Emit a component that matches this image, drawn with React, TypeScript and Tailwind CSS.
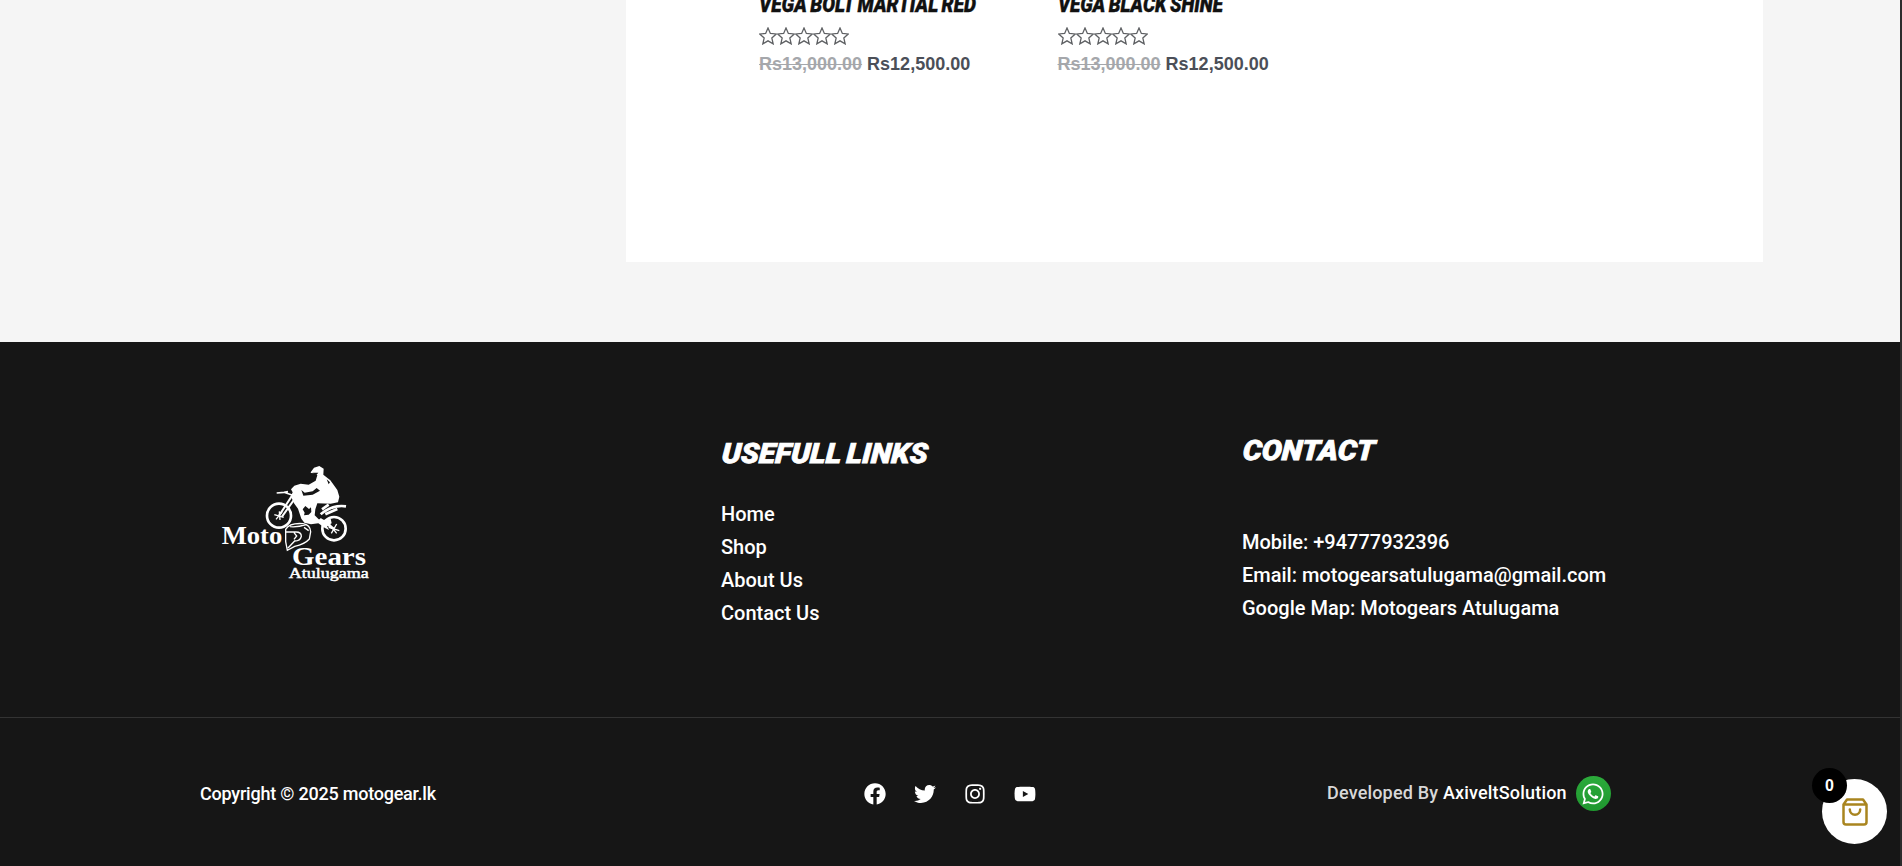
import { FaFacebook, FaTwitter, FaInstagram, FaYoutube, FaWhatsapp } from "react-icons/fa";

const starPath = "M8 .9l2.100 4.800 5.200.5-3.900 3.500 1.200 5.300L8 12.300 3.400 15l1.200-5.300L.7 6.200l5.200-.5z";

function Product({ name, width }: { name: string; width: number }) {
  return (
    <div className="flex w-[298.5px] flex-col items-start">
      <svg width={width + 8} height="24" className="block overflow-visible">
        <text x="0" y="20.5" textLength={width} lengthAdjust="spacingAndGlyphs" wordSpacing="-1.5" fontFamily="Roboto, sans-serif" fontWeight="900" fontStyle="italic" fontSize="21.5" fill="#111" stroke="#111" strokeWidth="0.4">
          {name}
        </text>
      </svg>
      <div className="mt-[12px] flex h-[18px]">
        {[0, 1, 2, 3, 4].map((i) => (
          <svg key={i} width="18" height="18" viewBox="0 0 16 16" fill="none" stroke="#5f6164" strokeWidth="1.15">
            <path d={starPath} />
          </svg>
        ))}
      </div>
      <div className="mt-[6px] flex gap-[5px] text-[18px] font-bold leading-[27px] text-[#4b4f58]">
        <del className="text-[#a5a7ab]">Rs13,000.00</del>
        <span>Rs12,500.00</span>
      </div>
    </div>
  );
}

function Heading({ text, width }: { text: string; width: number }) {
  return (
    <h2>
      <svg width={width + 8} height="30" className="block overflow-visible">
        <text x="0" y="25" transform="translate(2 0) skewX(-4)" textLength={width} lengthAdjust="spacingAndGlyphs" wordSpacing="-2" fontFamily="Roboto, sans-serif" fontWeight="900" fontStyle="italic" fontSize="28" fill="#fff" stroke="#fff" strokeWidth="0.8">
          {text}
        </text>
      </svg>
    </h2>
  );
}

function Logo() {
  return (
    <svg width="190" height="150" viewBox="0 0 570 450" fill="#fff">
      <g fill="none" stroke="#fff">
        <circle cx="237" cy="197" r="36" strokeWidth="8" />
        <circle cx="402" cy="236" r="35" strokeWidth="8" />
        <path d="M237 197L290 116M246 200L300 124" strokeWidth="6" />
        <path d="M223 194l28 8M228 208l18-22M238 184l2 26M386 232l32 10M394 250l16-28M388 222l22 28" strokeWidth="4" />
        <path d="M230 129l22-2 24 8M252 127l12-2" strokeWidth="5" />
        <path d="M362 193q35-30 76-24M360 207l42 30M376 193l36-16M366 178l20-14" strokeWidth="8" />
        <path d="M257 238q12-20 52-17 22 4 23 24l-4 22q-14 16-44 22l-22 12-5-26zM257 246h31q16 0 16 13-3 14-20 14l-20 21M282 248l8 10-8 10M270 230q24 2 48-6M312 232l14 10" strokeWidth="4" />
      </g>
      <path d="M332 67l10-14 16-5 13 8-1 18 21 17 21 29 6 20-4 17-22 4-40-1-6 18-2 18 12 12 22 2 14-4 3 14-14 8 6 12-12-6-20-14-22 3-20-5-9-12-10-30-12-16-7-16 3-17-5-9 10-11 19-6 24 3 21-12 5-16-8-6-11-1z" />
      <path d="M350 114l-12 10-24 4-10-8 6 17 28-3 22-12zM316 168l-8 10 6 10-2 8 14-2 8-8-1-14-6 5zM337 68h18l-6 7zM380 88l10 9-4 6z" fill="#161616" />
      <g fontFamily="'Liberation Serif', serif" fontWeight="700">
        <text x="65" y="283" fontSize="76" textLength="182" lengthAdjust="spacingAndGlyphs">Moto</text>
        <text x="276" y="344" fontSize="76" textLength="222" lengthAdjust="spacingAndGlyphs">Gears</text>
        <text x="266" y="384" fontSize="46" textLength="240" lengthAdjust="spacingAndGlyphs" fontWeight="400" stroke="#fff" strokeWidth="1.500">Atulugama</text>
      </g>
    </svg>
  );
}

export default function App() {
  return (
    <div className="flex h-[866px] w-[1902px] overflow-hidden bg-[#f5f5f5] font-['Roboto',sans-serif]">
      <div className="relative flex w-[1900px] flex-col">
        <main className="flex h-[342px] pl-[626px]">
          <section className="flex h-[262px] w-[1137px] items-start overflow-hidden bg-white pl-[133px] font-['Liberation_Sans',sans-serif]">
            <div className="-mt-[9px] flex">
              <Product name="VEGA BOLT MARTIAL RED" width={217} />
              <Product name="VEGA BLACK SHINE" width={165} />
            </div>
          </section>
        </main>
        <footer className="flex flex-1 flex-col bg-[#161616] font-medium text-white">
          <div className="flex h-[376px] border-b border-[#333]">
            <div className="w-[721px] pl-[200px] pt-[108px]">
              <Logo />
            </div>
            <div className="w-[521px] pt-[96px]">
              <Heading text="USEFULL LINKS" width={206} />
              <nav className="mt-[30px] flex flex-col text-[20px] leading-[33px]">
                <a>Home</a>
                <a>Shop</a>
                <a>About Us</a>
                <a>Contact Us</a>
              </nav>
            </div>
            <div className="pt-[93px]">
              <Heading text="CONTACT" width={132} />
              <div className="mt-[61px] text-[20px] leading-[33px]">
                <p>Mobile: +94777932396</p>
                <p>Email: motogearsatulugama@gmail.com</p>
                <p>Google Map: Motogears Atulugama</p>
              </div>
            </div>
          </div>
          <div className="flex h-[148px] items-start text-[18px]">
            <p className="w-[864px] pl-[200px] pt-[62px] leading-[28px] tracking-[-0.22px]">Copyright © 2025 motogear.lk</p>
            <div className="flex w-[463px] gap-[28px] pt-[65px]">
              <FaFacebook size={22} />
              <FaTwitter size={22} />
              <FaInstagram size={22} />
              <FaYoutube size={22} />
            </div>
            <div className="flex items-start gap-[9px] pt-[58px]">
              <p className="leading-[34px] tracking-[0.18px] text-[#d8d8d8]">
                Developed By <span className="text-white">AxiveltSolution</span>
              </p>
              <span className="flex size-[35px] items-center justify-center rounded-full bg-linear-to-b from-[#2cab3b] to-[#1f972f]">
                <FaWhatsapp size={24} />
              </span>
            </div>
          </div>
        </footer>
        <button className="absolute left-[1822px] top-[779px] flex size-[65px] items-center justify-center rounded-full bg-white">
          <svg width="26" height="28" viewBox="0 0 26 28" fill="none" stroke="#a9851f" strokeWidth="2.500" strokeLinejoin="round" strokeLinecap="round">
            <path d="M1.500 6.500L5 1.500h16l3.500 5V24a2.500 2.500 0 0 1-2.500 2.500H4A2.500 2.500 0 0 1 1.500 24zM1.500 6.500h23M7.800 11.500a5.200 5.200 0 0 0 10.400 0" />
          </svg>
          <span className="absolute -left-[10px] -top-[11px] flex size-[35px] items-center justify-center rounded-full bg-black font-['Liberation_Sans',sans-serif] text-[16px] font-bold text-white">0</span>
        </button>
      </div>
      <div className="w-[2px] bg-[#2c2c2c]" />
    </div>
  );
}
